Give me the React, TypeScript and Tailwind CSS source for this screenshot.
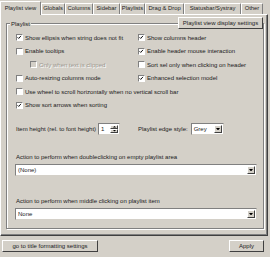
import React from 'react'

const tabs = [
  { label: 'Playlist view', w: 'w-[41px]', active: true },
  { label: 'Globals', w: 'w-[24px]' },
  { label: 'Columns', w: 'w-[28px]' },
  { label: 'Sidebar', w: 'w-[27px]' },
  { label: 'Playlists', w: 'w-[25px]' },
  { label: 'Drag & Drop', w: 'w-[39px]' },
  { label: 'Statusbar/Systray', w: 'w-[57px]' },
  { label: 'Other', w: 'w-[22px]' },
]

function Check({ checked = false, disabled = false }: { checked?: boolean; disabled?: boolean }) {
  return (
    <span
      className={`relative inline-block w-[7px] h-[7px] shrink-0 border-t border-l border-t-[#808080] border-l-[#808080] border-b border-r border-b-white border-r-white ${
        disabled ? 'bg-[#d4d0c8]' : 'bg-white'
      }`}
    >
      {checked && (
        <svg viewBox="0 0 7 7" className="absolute left-0 top-0 w-[5px] h-[5px]">
          <path d="M0.8 3.2 L2.4 4.8 L5.6 1.2" fill="none" stroke="#000" strokeWidth="1.3" />
        </svg>
      )}
    </span>
  )
}

function CheckRow({ label, checked, disabled, className = '' }: { label: string; checked?: boolean; disabled?: boolean; className?: string }) {
  return (
    <div className={`flex items-center gap-[2px] h-[13.5px] ${className}`}>
      <Check checked={checked} disabled={disabled} />
      <span className={`whitespace-nowrap ${disabled ? 'text-[#9a978f] [text-shadow:1px_1px_0_#fff]' : ''}`}>{label}</span>
    </div>
  )
}

function DropArrow() {
  return (
    <span className="flex items-center justify-center w-[8px] h-full bg-[#d4d0c8] border-t border-l border-t-white border-l-white border-b border-r border-b-[#404040] border-r-[#404040]">
      <svg viewBox="0 0 5 3" className="w-[4px] h-[2.5px]">
        <path d="M0 0 H5 L2.5 3 Z" fill="#000" />
      </svg>
    </span>
  )
}

function Combo({ value, className = '' }: { value: string; className?: string }) {
  return (
    <div className={`flex items-stretch h-[12px] bg-white border-t border-l border-t-[#808080] border-l-[#808080] border-b border-r border-b-[#d4d0c8] border-r-[#d4d0c8] p-[1px] ${className}`}>
      <span className="flex-1 flex items-center pl-[1px] whitespace-nowrap">{value}</span>
      <DropArrow />
    </div>
  )
}

export default function App() {
  return (
    <div
      className="relative w-[270px] h-[257px] overflow-hidden bg-[#d4d0c8] text-[#1a1a1a] text-[6px] leading-none"
      style={{ fontFamily: '"Liberation Sans", Arial, sans-serif' }}
    >
      {/* tab strip */}
      <div className="flex items-end h-[14px] text-[5.8px]">
        {tabs.map((t) => (
          <div
            key={t.label}
            className={`${t.w} flex items-center justify-center whitespace-nowrap rounded-t-[1px] border-t border-l border-t-white border-l-white border-r border-r-[#808080] ${
              t.active ? 'h-[14px] relative z-10 bg-[#d4d0c8] -mb-[1px]' : 'h-[11px]'
            }`}
          >
            {t.label}
          </div>
        ))}
      </div>

      {/* tab pane */}
      <div className="relative w-[268px] h-[222px] border-t border-l border-t-white border-l-white border-b border-r border-b-[#404040] border-r-[#404040]">
        <div className="absolute inset-0 border-b border-r border-b-[#808080] border-r-[#808080] pointer-events-none" />

        <button className="absolute right-[4px] top-[2px] z-10 w-[85px] h-[12px] bg-[#d4d0c8] border-t border-l border-t-white border-l-white border-b border-r border-b-[#404040] border-r-[#404040] flex items-center justify-center whitespace-nowrap">
          Playlist view display settings
        </button>

        {/* group box */}
        <div className="relative ml-[5px] mt-[8px] w-[258px] h-[206px] border border-[#808080] shadow-[inset_1px_1px_0_#fff,1px_1px_0_#fff] pl-[9px] pr-[6px] pt-[7px]">
          <span className="absolute left-[3px] -top-[3px] px-[1px] bg-[#d4d0c8]">Playlist</span>

          <div className="grid grid-cols-[122px_1fr]">
            <CheckRow label="Show ellipsis when string does not fit" checked />
            <CheckRow label="Show columns header" checked />
            <CheckRow label="Enable tooltips" />
            <CheckRow label="Enable header mouse interaction" checked />
            <CheckRow label="Only when text is clipped" disabled className="pl-[14px]" />
            <CheckRow label="Sort sel only when clicking on header" />
            <CheckRow label="Auto-resizing columns mode" />
            <CheckRow label="Enhanced selection model" checked />
          </div>
          <CheckRow label="Use wheel to scroll horizontally when no vertical scroll bar" />
          <CheckRow label="Show sort arrows when sorting" checked />

          <div className="grid grid-cols-[122px_1fr] mt-[11px] h-[12px]">
            <div className="flex items-center">
              <span className="whitespace-nowrap">Item height (rel. to font height)</span>
              <div className="ml-[2px] flex items-stretch w-[22px] h-[12px] bg-white border-t border-l border-t-[#808080] border-l-[#808080] border-b border-r border-b-[#d4d0c8] border-r-[#d4d0c8] p-[1px]">
                <span className="flex-1 flex items-center pl-[1px]">1</span>
                <span className="flex flex-col w-[8px]">
                  {[0, 1].map((i) => (
                    <span
                      key={i}
                      className="flex-1 flex items-center justify-center bg-[#d4d0c8] border-t border-l border-t-white border-l-white border-b border-r border-b-[#404040] border-r-[#404040]"
                    >
                      <svg viewBox="0 0 4 2" className="w-[3px] h-[1.5px]">
                        <path d={i === 0 ? 'M0 2 L2 0 L4 2 Z' : 'M0 0 H4 L2 2 Z'} fill="#000" />
                      </svg>
                    </span>
                  ))}
                </span>
              </div>
            </div>
            <div className="flex items-center">
              <span className="whitespace-nowrap">Playlist edge style:</span>
              <Combo value="Grey" className="ml-[3px] w-[33px]" />
            </div>
          </div>

          <div className="mt-[19px] whitespace-nowrap h-[7px]">Action to perform when doubleclicking on empty playlist area</div>
          <Combo value="(None)" className="mt-[3px] -ml-[1px] w-[242px]" />

          <div className="mt-[22px] whitespace-nowrap h-[7px]">Action to perform when middle clicking on playlist item</div>
          <Combo value="None" className="mt-[3px] -ml-[1px] w-[242px]" />
        </div>
      </div>

      {/* bottom buttons */}
      <div className="flex justify-between items-center pl-[2px] pr-[6px] mt-[4px]">
        <button className="w-[96px] h-[12px] bg-[#d4d0c8] border-t border-l border-t-white border-l-white border-b border-r border-b-[#404040] border-r-[#404040] flex items-center justify-center whitespace-nowrap">
          go to title formatting settings
        </button>
        <button className="w-[35px] h-[12px] bg-[#d4d0c8] border-t border-l border-t-white border-l-white border-b border-r border-b-[#404040] border-r-[#404040] flex items-center justify-center">
          Apply
        </button>
      </div>
    </div>
  )
}
